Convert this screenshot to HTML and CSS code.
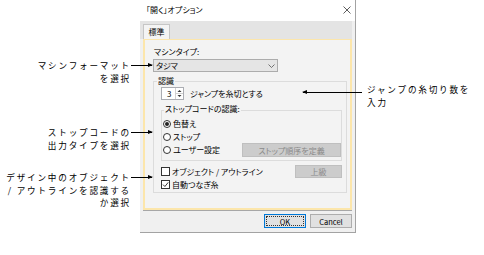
FILE: index.html
```html
<!DOCTYPE html>
<html lang="ja">
<head>
<meta charset="utf-8">
<title>開くオプション</title>
<link rel="stylesheet" href="styles.css">
</head>
<body>
<div class="stage">
  <div class="notes-left">
    <div class="note note-1"><span class="ln">マシンフォーマット</span><span class="ln">を選択</span><span class="leader leader-r"></span></div>
    <div class="note note-2"><span class="ln">ストップコードの</span><span class="ln">出力タイプを選択</span><span class="leader leader-r"></span></div>
    <div class="note note-3"><span class="ln">デザイン中のオブジェクト</span><span class="ln">/ アウトラインを認識する</span><span class="ln">か選択</span><span class="leader leader-r"></span></div>
  </div>

  <div class="dialog">
    <div class="titlebar">
      <span class="title">「開く」オプション</span>
      <svg class="close" width="8" height="8" viewBox="0 0 8 8"><path d="M0.5 0.5L7.5 7.5M7.5 0.5L0.5 7.5" stroke="#333" stroke-width="0.8" fill="none"/></svg>
    </div>
    <div class="tabrow"><div class="tab">標準</div></div>
    <div class="panel">
      <div class="lbl">マシンタイプ:</div>
      <div class="combo">
        <span>タジマ</span>
        <svg width="7" height="4" viewBox="0 0 7 4"><path d="M0.5 0.5L3.5 3.5L6.5 0.5" fill="none" stroke="#555" stroke-width="0.8"/></svg>
      </div>
      <div class="group outer">
        <div class="gtitle">認識</div>
        <div class="spin-row">
          <div class="spin">
            <span class="spin-val">3</span>
            <svg class="spin-arrows" width="8" height="11" viewBox="0 0 8 11"><path d="M0.5 0V11M0.5 5.5H8" stroke="#d0d0d0" stroke-width="1"/><path d="M2.5 4L4.5 2L6.5 4Z M2.5 7L4.5 9L6.5 7Z" fill="#333"/></svg>
          </div>
          <span class="spin-text">ジャンプを糸切とする</span>
        </div>
        <div class="group inner">
          <div class="gtitle">ストップコードの認識:</div>
          <div class="opt first"><span class="radio on"></span>色替え</div>
          <div class="opt"><span class="radio"></span>ストップ</div>
          <div class="opt opt-btn"><span class="radio"></span>ユーザー設定<span class="btn dis wide">ストップ順序を定義</span></div>
        </div>
        <div class="chk-row first"><span class="check"></span>オブジェクト / アウトライン<span class="btn dis small">上級</span></div>
        <div class="chk-row"><span class="check">
          <svg width="7" height="7" viewBox="0 0 7 7"><path d="M1 3.6L2.9 5.5L6.2 1.4" fill="none" stroke="#222" stroke-width="0.9"/></svg>
        </span>自動つなぎ糸</div>
      </div>
    </div>
    <div class="footer">
      <span class="btn btn-ok"><span class="focus">OK</span></span>
      <span class="btn btn-cancel">Cancel</span>
    </div>
  </div>

  <div class="notes-right">
    <div class="note note-r"><span class="ln">ジャンプの糸切り数を</span><span class="ln">入力</span><span class="leader leader-l"></span></div>
  </div>
</div>
</body>
</html>
```

FILE: styles.css
```css
body {
  margin: 0;
  width: 484px;
  height: 255px;
  background: #ffffff;
  overflow: hidden;
}

.stage {
  display: flex;
  align-items: flex-start;
}

/* ---------- annotations ---------- */
.notes-left {
  width: 140px;
  flex: none;
  box-sizing: border-box;
  padding-right: 9px;
  text-align: right;
  font: 8.6px/12.5px "Noto Sans CJK JP", sans-serif;
  letter-spacing: 1.8px;
  color: #000;
}

.notes-right {
  flex: 1;
  padding-left: 11px;
  font: 8.6px/13px "Noto Sans CJK JP", sans-serif;
  letter-spacing: 1.8px;
  color: #000;
}

.note { position: relative; }
.note-1 { margin-top: 59px; }
.note-2 { margin-top: 42px; }
.note-3 { margin-top: 20px; }
.note-r { margin-top: 82.5px; }

.ln { display: block; }

.leader {
  position: absolute;
  height: 1px;
  background: #000;
  z-index: 2;
}
.leader-r { left: 100%; top: 6px; width: 21px; }
.leader-l { left: -64px; top: 9px; width: 59px; }

.leader-r::after,
.leader-l::after {
  content: "";
  position: absolute;
  top: -2px;
  border-top: 2.5px solid transparent;
  border-bottom: 2.5px solid transparent;
}
.leader-r::after { right: -1px; border-left: 5px solid #000; }
.leader-l::after { left: -1px; border-right: 5px solid #000; }

/* ---------- dialog ---------- */
.dialog {
  width: 216px;
  height: 233px;
  flex: none;
  box-sizing: border-box;
  background: #f0f0f0;
  border-right: 1px solid #a3a3a3;
  border-bottom: 1px solid #a3a3a3;
  font: 8px/12px "Noto Sans CJK JP", sans-serif;
  font-feature-settings: "palt";
  color: #000;
}

.titlebar {
  height: 21px;
  box-sizing: border-box;
  background: #ffffff;
  display: flex;
  align-items: center;
  justify-content: space-between;
  padding: 0 4px 2px 6px;
}

.tabrow {
  height: 18px;
  margin-right: 3px;
  background: #e4e4e4;
  display: flex;
  align-items: flex-end;
}

.tab {
  width: 27px;
  height: 15px;
  margin-left: 3px;
  box-sizing: border-box;
  background: #f4f4f4;
  border: 1px solid #c6c6c6;
  border-bottom: none;
  text-align: center;
  line-height: 14px;
}

.panel {
  height: 171px;
  margin: 0 3px;
  box-sizing: border-box;
  background: #f3f3f3;
  border: 2px solid #fce6ab;
  border-top-width: 1px;
  box-shadow: 0 1px 0 #a7a7a7;
  padding: 6px 0 0 8px;
}

.lbl {
  margin-left: 1px;
  line-height: 12px;
}

.combo {
  margin-top: 1px;
  width: 125px;
  height: 13px;
  box-sizing: border-box;
  border: 1px solid #acacac;
  background: #e5e5e5;
  display: flex;
  align-items: center;
  justify-content: space-between;
  padding: 0 2px 0 2px;
  line-height: 11px;
}

.group {
  border: 1px solid #dcdcdc;
  box-sizing: border-box;
}

.outer {
  margin-top: 9px;
  width: 194px;
  height: 112px;
}

.gtitle {
  width: fit-content;
  margin: -7px 0 0 3px;
  padding: 0 1px;
  background: #f3f3f3;
  line-height: 12px;
}

.spin-row {
  display: flex;
  align-items: center;
  height: 13px;
  margin-left: 7px;
}

.spin {
  width: 23px;
  height: 13px;
  box-sizing: border-box;
  border: 1px solid #abadb3;
  background: #ffffff;
  display: flex;
  align-items: center;
  justify-content: space-between;
  padding-left: 5px;
  line-height: 11px;
}

.spin-text { margin-left: 6px; }

.inner {
  margin: 10px 0 0 7px;
  width: 181px;
  height: 51px;
}
.inner .gtitle { margin: -8px 0 0 2px; }

.opt {
  display: flex;
  align-items: center;
  height: 13px;
  margin-left: 1px;
}
.opt.first { margin-top: 2px; }
.opt-btn { height: 14px; }

.radio {
  width: 8px;
  height: 8px;
  box-sizing: border-box;
  border: 1px solid #333;
  border-radius: 50%;
  background: #ffffff;
  margin-right: 2px;
  display: flex;
  align-items: center;
  justify-content: center;
}
.radio.on::after {
  content: "";
  width: 4px;
  height: 4px;
  border-radius: 50%;
  background: #222;
}

.btn {
  display: flex;
  align-items: center;
  justify-content: center;
  box-sizing: border-box;
  border: 1px solid #adadad;
  background: #e1e1e1;
  line-height: 11px;
}
.btn.dis {
  border-color: #bfbfbf;
  background: #cccccc;
  color: #8a8a8a;
}
.btn.wide {
  width: 99px;
  height: 14px;
  margin-left: auto;
}
.btn.small {
  width: 47px;
  height: 13px;
  margin-left: auto;
  margin-right: 4px;
}

.chk-row {
  display: flex;
  align-items: center;
  height: 13px;
  margin-left: 7px;
}
.chk-row.first { margin-top: 4px; }

.check {
  width: 9px;
  height: 9px;
  box-sizing: border-box;
  border: 1px solid #333;
  background: #ffffff;
  margin-right: 2px;
  display: flex;
  align-items: center;
  justify-content: center;
}

.footer {
  display: flex;
  justify-content: flex-end;
  gap: 4px;
  padding: 4px 3px 0 0;
}

.btn-ok,
.btn-cancel {
  width: 42px;
  height: 14px;
  font-size: 7.5px;
}
.btn-ok {
  border-color: #0078d7;
  padding: 1px;
}
.focus {
  width: 100%;
  height: 100%;
  box-sizing: border-box;
  border: 1px dotted #333;
  display: flex;
  align-items: center;
  justify-content: center;
}
```
